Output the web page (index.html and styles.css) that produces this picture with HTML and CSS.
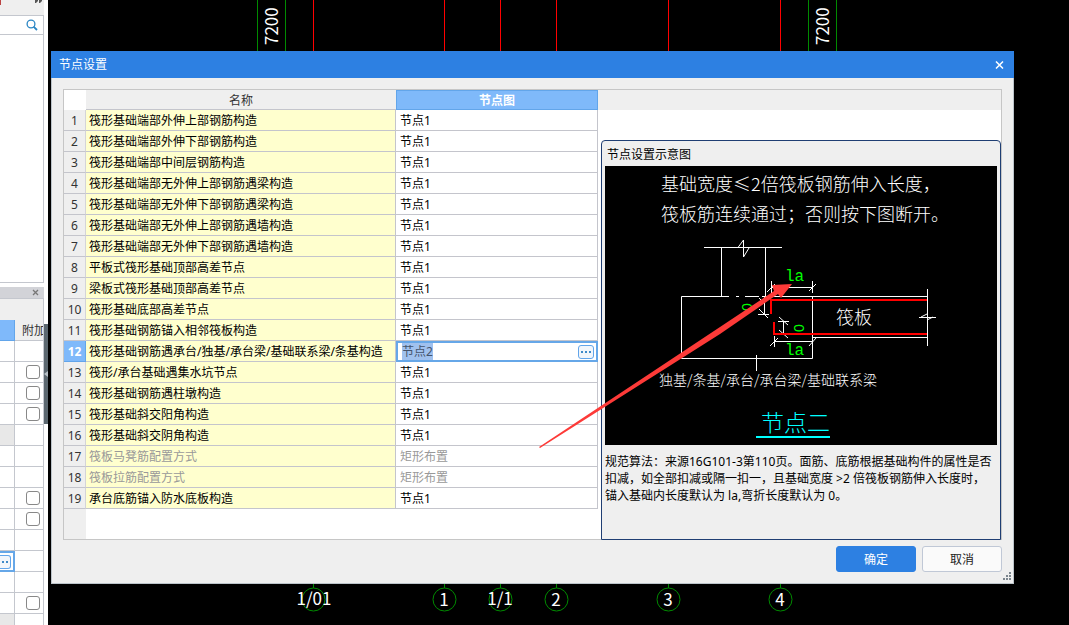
FILE: index.html
```html
<!DOCTYPE html>
<html lang="zh-CN">
<head>
<meta charset="utf-8">
<title>节点设置</title>
<link rel="stylesheet" href="styles.css">
</head>
<body>
<div class="app">
  <aside class="sidebar">
    <div class="panel-head">
      <svg class="panel-icons" viewBox="0 0 44 15" width="44" height="15" aria-hidden="true">
        <rect x="0" y="0" width="1" height="5" fill="#b44"/>
        <path d="M35 0h3v1l-2 2h-1zM39 0h3v1l-2 2h-1z" fill="#555"/>
      </svg>
    </div>
    <div class="search">
      <input class="search-input" type="text" aria-label="搜索">
      <svg class="search-icon" viewBox="0 0 12 12" width="12" height="12" aria-hidden="true">
        <circle cx="5" cy="5" r="3.9" fill="none" stroke="#2a86c4" stroke-width="1.3"/>
        <path d="M7.6 7.6L11 11" stroke="#2a86c4" stroke-width="1.8"/>
      </svg>
    </div>
    <div class="list"></div>
    <div class="props-head"><button class="mini-close" aria-label="关闭面板"><svg viewBox="0 0 7 7" width="7" height="7"><path d="M1 1l5 5M6 1L1 6" stroke="#777" stroke-width="1.3"/></svg></button></div>
    <div class="props-tools"></div>
    <table class="props">
      <tr class="props-title"><th class="on"></th><th>附加</th></tr>
      <tr><td></td><td></td></tr>
      <tr><td></td><td><input type="checkbox" aria-label="附加 1"></td></tr>
      <tr><td></td><td><input type="checkbox" aria-label="附加 2"></td></tr>
      <tr><td></td><td><input type="checkbox" aria-label="附加 3"></td></tr>
      <tr><td class="dim"></td><td></td></tr>
      <tr><td></td><td></td></tr>
      <tr><td></td><td></td></tr>
      <tr><td></td><td><input type="checkbox" aria-label="附加 4"></td></tr>
      <tr><td></td><td><input type="checkbox" aria-label="附加 5"></td></tr>
      <tr><td></td><td></td></tr>
      <tr><td class="editing"><button class="more small" aria-label="更多"><i></i><i></i></button></td><td></td></tr>
      <tr><td></td><td></td></tr>
      <tr><td></td><td><input type="checkbox" aria-label="附加 6"></td></tr>
      <tr><td class="dim"></td><td></td></tr>
    </table>
    <button class="collapse" aria-label="收起"><svg viewBox="0 0 4 6" width="4" height="6"><path d="M4 0v6L0 3z" fill="#b8c0c6"/></svg></button>
  </aside>

  <main class="canvas">
    <svg class="grid-top" width="1021" height="52" viewBox="0 0 1021 52">
      <g class="axis green"><path d="M209.5 0V52M237.5 0V52M760.5 0V52M788.5 0V52"/></g>
      <g class="axis red"><path d="M265.5 0V52M396.5 0V52M452.5 0V52M508.5 0V52M620.5 0V52M732.5 0V52"/></g>
      <text class="dim-text" transform="translate(230 45) rotate(-90)">7200</text>
      <text class="dim-text" transform="translate(781 45) rotate(-90)">7200</text>
    </svg>
    <svg class="grid-bottom" width="1021" height="45" viewBox="0 0 1021 45">
      <g class="axis green">
        <path d="M265.5 0V8M396.5 0V8M452.5 0V8M508.5 0V8M620.5 0V8M732.5 0V8"/>
        <circle cx="265.500" cy="19.500" r="11.500"/><circle cx="396.500" cy="19.500" r="11.500"/><circle cx="452.500" cy="19.500" r="11.500"/>
        <circle cx="508.500" cy="19.500" r="11.500"/><circle cx="620.500" cy="19.500" r="11.500"/><circle cx="732.500" cy="19.500" r="11.500"/>
      </g>
      <g class="dim-text mid">
        <text x="266" y="25">1/01</text><text x="396" y="26">1</text><text x="452" y="25">1/1</text>
        <text x="508" y="26">2</text><text x="620" y="26">3</text><text x="732" y="26">4</text>
      </g>
    </svg>
  </main>

  <section class="dialog" role="dialog" aria-label="节点设置">
    <header class="titlebar">
      <span>节点设置</span>
      <button class="close" aria-label="关闭"><svg viewBox="0 0 9 8" width="9" height="8"><path d="M1 .5l7 7M8 .5l-7 7" stroke="#fff" stroke-width="1.5"/></svg></button>
    </header>
    <div class="frame">
      <div class="table-side">
        <table class="nodes">
          <thead><tr><th class="num corner"></th><th class="name">名称</th><th class="val on">节点图</th></tr></thead>
          <tbody>
            <tr><th class="num">1</th><td class="name">筏形基础端部外伸上部钢筋构造</td><td>节点1</td></tr>
            <tr><th class="num">2</th><td class="name">筏形基础端部外伸下部钢筋构造</td><td>节点1</td></tr>
            <tr><th class="num">3</th><td class="name">筏形基础端部中间层钢筋构造</td><td>节点1</td></tr>
            <tr><th class="num">4</th><td class="name">筏形基础端部无外伸上部钢筋遇梁构造</td><td>节点1</td></tr>
            <tr><th class="num">5</th><td class="name">筏形基础端部无外伸下部钢筋遇梁构造</td><td>节点1</td></tr>
            <tr><th class="num">6</th><td class="name">筏形基础端部无外伸上部钢筋遇墙构造</td><td>节点1</td></tr>
            <tr><th class="num">7</th><td class="name">筏形基础端部无外伸下部钢筋遇墙构造</td><td>节点1</td></tr>
            <tr><th class="num">8</th><td class="name">平板式筏形基础顶部高差节点</td><td>节点1</td></tr>
            <tr><th class="num">9</th><td class="name">梁板式筏形基础顶部高差节点</td><td>节点1</td></tr>
            <tr><th class="num">10</th><td class="name">筏形基础底部高差节点</td><td>节点1</td></tr>
            <tr><th class="num">11</th><td class="name">筏形基础钢筋锚入相邻筏板构造</td><td>节点1</td></tr>
            <tr><th class="num on">12</th><td class="name">筏形基础钢筋遇承台/独基/承台梁/基础联系梁/条基构造</td><td class="editing"><div class="editor"><input class="node-input" type="text" value="节点2" aria-label="节点图"><button class="more" aria-label="选择节点图"><i></i><i></i><i></i></button></div></td></tr>
            <tr><th class="num">13</th><td class="name">筏形/承台基础遇集水坑节点</td><td>节点1</td></tr>
            <tr><th class="num">14</th><td class="name">筏形基础钢筋遇柱墩构造</td><td>节点1</td></tr>
            <tr><th class="num">15</th><td class="name">筏形基础斜交阳角构造</td><td>节点1</td></tr>
            <tr><th class="num">16</th><td class="name">筏形基础斜交阴角构造</td><td>节点1</td></tr>
            <tr class="off"><th class="num">17</th><td class="name">筏板马凳筋配置方式</td><td>矩形布置</td></tr>
            <tr class="off"><th class="num">18</th><td class="name">筏板拉筋配置方式</td><td>矩形布置</td></tr>
            <tr><th class="num">19</th><td class="name">承台底筋锚入防水底板构造</td><td>节点1</td></tr>
          </tbody>
        </table>
        <div class="gutter"></div>
      </div>
      <div class="preview">
        <div class="head-strip"></div>
        <div class="group">
          <div class="legend">节点设置示意图</div>
          <svg class="diagram" viewBox="0 0 392 279">
            <rect width="392" height="279" fill="#000"/>
            <g class="cad white">
              <path d="M99 81.500H177M133 81.500L138.500 74V91L144 82"/>
              <path d="M116.500 81V130M160.500 81V130"/>
              <path d="M124 130.500H76.500V192.500H207.500V130M131 130.500h3M140 130.500h14M157 130.500H322M322.500 123V180M207 171.500H322"/>
              <path d="M151.500 189V205"/>
              <path d="M166 121.500H208M166.500 115V127M207.500 115V127M162 126l8-8M204 125l7-7"/>
              <path d="M159.500 130V149M153 148.500h11M154 143l9 9M154 132l5 5"/>
              <path d="M178.500 155V169M173 155.500h11M173 168.500h11M174 151l9 8M174 164l9 8"/>
              <path d="M169 175.500H208M169.500 170V181M165 180l8-8M204 180l7-8"/>
              <path d="M314 151.500h17M322 154l6-3M316 151l6-3"/>
            </g>
            <g class="cad rebar"><path d="M166 148V134H322M169 156V168H322"/></g>
            <g class="mark">
              <text x="180" y="115">la</text><text x="180" y="189">la</text>
              <text class="zero" transform="translate(147 145) rotate(-90)">0</text>
              <text class="zero" transform="translate(199 166) rotate(-90)">0</text>
            </g>
            <g class="note">
              <text x="56" y="25">基础宽度≤2倍筏板钢筋伸入长度，</text>
              <text x="56" y="55">筏板筋连续通过；否则按下图断开。</text>
              <text x="231" y="158">筏板</text>
              <text class="small" x="54" y="219">独基/条基/承台/承台梁/基础联系梁</text>
              <text class="name" x="156" y="265">节点二</text>
            </g>
            <path d="M151 271H225" stroke="#0ff" stroke-width="2"/>
          </svg>
          <p class="desc">规范算法：来源16G101-3第110页。面筋、底筋根据基础构件的属性是否<br>扣减，如全部扣减或隔一扣一，且基础宽度 &gt;2 倍筏板钢筋伸入长度时，<br>锚入基础内长度默认为 la,弯折长度默认为 0。</p>
        </div>
      </div>
    </div>
    <footer class="actions">
      <button class="btn primary">确定</button>
      <button class="btn">取消</button>
    </footer>
    <svg class="grip" viewBox="0 0 8 8" width="8" height="8" aria-hidden="true"><path d="M6 0h2v2H6zM3 3h2v2H3zM6 3h2v2H6zM0 6h2v2H0zM3 6h2v2H3zM6 6h2v2H6z" fill="#7c868e"/></svg>
    <svg class="pointer" viewBox="0 0 256 168" width="256" height="168" aria-hidden="true"><path d="M1 166L182 46L236 10L234 4L254 3L243 17L240 13L182 53L2 167Z" fill="#fd3a38"/></svg>
  </section>
</div>
</body>
</html>
```
FILE: styles.css
```css
* { box-sizing: border-box; }
body {
  margin: 0;
  font: 12px/20px "Noto Sans", "Noto Sans CJK SC", sans-serif;
  color: #000;
}
button, input { font: inherit; color: inherit; margin: 0; padding: 0; }
svg { display: block; }
table { border-collapse: separate; border-spacing: 0; table-layout: fixed; }

.app { position: relative; display: flex; height: 100vh; overflow: hidden; background: #000; }

/* left docked panels */
.sidebar {
  position: relative;
  flex: none;
  display: flex;
  flex-direction: column;
  width: 48px;
  padding-right: 4px;
  overflow: hidden;
  background: #fff;
}
.panel-head { flex: none; height: 15px; background: #efefef; }
.search {
  flex: none;
  display: flex;
  align-items: center;
  height: 20px;
  padding-right: 5px;
  border: 1px solid #c4c7ce;
  border-left: 0;
}
.search-input { flex: 1; min-width: 0; border: 0; background: none; outline: 0; }
.list { flex: none; height: 248px; border: solid #c4c7ce; border-width: 0 1px 1px 0; }
.props-head {
  flex: none;
  display: flex;
  justify-content: flex-end;
  align-items: center;
  height: 12px;
  margin-top: 4px;
  padding-right: 5px;
  background: #d2d3d8;
  border-bottom: 1px solid #c4c7ce;
}
.mini-close { border: 0; background: none; line-height: 0; }
.props-tools { flex: none; height: 21px; background: #efefef; border-right: 1px solid #c4c7ce; }
.props { flex: none; width: 44px; }
.props td, .props th {
  height: 21px;
  padding: 0;
  overflow: hidden;
  border: solid #c4c7ce;
  border-width: 0 1px 1px 0;
  line-height: 0;
}
.props th { background: #efefef; font-weight: 400; line-height: 18px; white-space: nowrap; text-align: left; padding: 2px 0 0 7px; color: #333; }
.props th:first-child { width: 15px; }
.props th.on { background: #7fb9fa; border-color: #62a5ea; }
.props td.dim { background: #e8e8e8; }
.props td:last-child { padding-left: 11px; }
.props td.editing { border: 2px solid #66a7e8; border-left: 0; }
.props input {
  appearance: none;
  display: block;
  width: 14px;
  height: 14px;
  border: 1px solid #888;
  border-radius: 3px;
  background: #fff;
}
.collapse {
  position: absolute;
  right: 0;
  top: 324px;
  width: 4px;
  height: 100px;
  border: 0;
  background: #5c6870;
}

/* drawing area */
.canvas { position: relative; flex: 1; overflow: hidden; }
.grid-top { position: absolute; left: 0; top: 0; }
.grid-bottom { position: absolute; left: 0; top: 580px; }
.axis { fill: none; stroke-width: 1; }
.axis.green { stroke: #008a00; }
.axis.red { stroke: #f00; }
.dim-text { font: 17px "Noto Sans CJK SC", sans-serif; fill: #fff; }
.mid { text-anchor: middle; }

/* dialog window */
.dialog {
  position: absolute;
  left: 51px;
  right: 55px;
  top: 51px;
  background: #efefef;
  border: solid #bcc4ca;
  border-width: 0 1px 1px;
}
.titlebar {
  display: flex;
  justify-content: space-between;
  align-items: center;
  height: 27px;
  margin: 0 -1px;
  padding: 0 10px 0 8px;
  background: #2d80e2;
  color: #fff;
}
.close { border: 0; background: none; line-height: 0; }
.frame {
  display: flex;
  margin: 11px 11px 0;
  border: 1px solid #c6c6c6;
  background: #fff;
}
.table-side { flex: none; display: flex; flex-direction: column; width: 534px; }
.nodes { width: 100%; }
.nodes th, .nodes td {
  height: 21px;
  padding: 2px 3px 0;
  line-height: 18px;
  text-align: left;
  font-weight: 400;
  white-space: nowrap;
  border: solid #c4c5cc;
  border-width: 0 1px 1px 0;
}
.nodes thead th { height: 20px; line-height: 17px; text-align: center; background: #efefef; color: #333; border-right: 0; }
.nodes thead th.corner { background: #fff; border-color: #fff; }
.nodes thead th.on { background: #7fb9fa; border: 1px solid #62a5ea; color: #fff; font-weight: 700; line-height: 16px; }
.nodes .num { width: 22px; padding: 2px 0 0; text-align: center; background: #efefef; color: #333; border-right-color: #d4d4d8; }
.nodes .num.on { background: #7fb9fa; border-color: #62a5ea; color: #fff; font-weight: 700; }
.nodes thead .val { width: 202px; }
.nodes td.name { background: #ffffce; }
.nodes td:last-child { padding-left: 4px; }
.nodes .off td { color: #999; }
.nodes td.editing, .nodes td.editing:last-child { padding: 0; border: 0; }
.editor {
  display: flex;
  justify-content: space-between;
  align-items: center;
  height: 21px;
  padding: 0 2px 0 4px;
  border: 2px solid #66a7e8;
}
.node-input { width: 31px; height: 17px; border: 0; background: #a0c1ee; color: #44546c; }
.more {
  display: flex;
  justify-content: center;
  align-items: center;
  gap: 2px;
  width: 16px;
  height: 14px;
  border: 1px solid #62a5ea;
  border-radius: 3px;
  background: #f2f6fb;
}
.more i { width: 2px; height: 2px; background: #3f8ac8; }
.more.small { width: 11px; border-left: 0; border-radius: 0 3px 3px 0; }
.gutter { flex: 1; width: 22px; background: #efefef; }

.preview { flex: 1; display: flex; flex-direction: column; min-width: 0; }
.head-strip { height: 20px; margin-bottom: 30px; background: #efefef; }
.group {
  height: 400px;
  margin: 0 0 -1px 3px;
  padding: 4px 3px 0;
  border: 1px solid #1f3e73;
  border-radius: 4px 4px 0 0;
  background: #efefef;
}
.legend { padding-left: 2px; margin-bottom: 1px; }
.diagram { width: 100%; height: auto; }
.desc { margin: 8px -3px 0 0; line-height: 17px; white-space: nowrap; }

.cad { fill: none; stroke-width: 1; }
.cad.white { stroke: #fff; }
.cad.rebar { stroke: #f00; stroke-width: 2; }
.mark { font: 16px "Liberation Mono", monospace; fill: #0f0; }
.mark .zero { font: 14px "Liberation Sans", sans-serif; }
.note { font: 300 18px "Noto Sans CJK SC", sans-serif; fill: #fff; }
.note .small { font-size: 14px; }
.note .name { font-size: 23px; fill: #0ff; }

.actions { display: flex; justify-content: flex-end; gap: 6px; padding: 6px 11px 11px; }
.btn {
  width: 80px;
  height: 26px;
  padding-top: 1px;
  border: 1px solid #c0c8d6;
  border-radius: 3px;
  background: #fafafa;
  color: #222;
}
.btn.primary { border-color: #2d80e2; background: #2d80e2; color: #fff; }
.grip { position: absolute; right: 2px; bottom: 3px; }
.pointer { position: absolute; left: 486px; top: 230px; }
```
